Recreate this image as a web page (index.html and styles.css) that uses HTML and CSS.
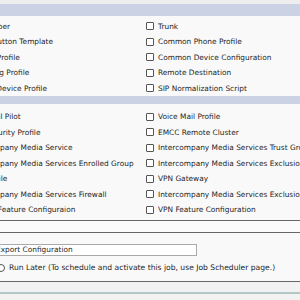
FILE: index.html
```html
<!DOCTYPE html>
<html>
<head>
<meta charset="utf-8">
<link rel="stylesheet" href="styles.css">
</head>
<body>
<div class="page">
  <div class="topband"></div>
  <div class="hdr hdr1"></div>
  <div class="grid sec1">
    <div class="cell"><span class="cb"></span><span>Gatekeeper</span></div>
    <div class="cell"><span class="cb"></span><span>Trunk</span></div>
    <div class="cell"><span class="cb"></span><span>Phone Button Template</span></div>
    <div class="cell"><span class="cb"></span><span>Common Phone Profile</span></div>
    <div class="cell"><span class="cb"></span><span>Softkey Profile</span></div>
    <div class="cell"><span class="cb"></span><span>Common Device Configuration</span></div>
    <div class="cell"><span class="cb"></span><span>Recording Profile</span></div>
    <div class="cell"><span class="cb"></span><span>Remote Destination</span></div>
    <div class="cell"><span class="cb"></span><span>Default Device Profile</span></div>
    <div class="cell"><span class="cb"></span><span>SIP Normalization Script</span></div>
  </div>
  <div class="hdr hdr2"></div>
  <div class="grid sec2">
    <div class="cell"><span class="cb"></span><span>Voicemail Pilot</span></div>
    <div class="cell"><span class="cb"></span><span>Voice Mail Profile</span></div>
    <div class="cell"><span class="cb"></span><span>Line Security Profile</span></div>
    <div class="cell"><span class="cb"></span><span>EMCC Remote Cluster</span></div>
    <div class="cell"><span class="cb"></span><span>Intercompany Media Service</span></div>
    <div class="cell"><span class="cb"></span><span>Intercompany Media Services Trust Group</span></div>
    <div class="cell"><span class="cb"></span><span>Intercompany Media Services Enrolled Group</span></div>
    <div class="cell"><span class="cb"></span><span>Intercompany Media Services Exclusion Group</span></div>
    <div class="cell"><span class="cb"></span><span>VPN Profile</span></div>
    <div class="cell"><span class="cb"></span><span>VPN Gateway</span></div>
    <div class="cell"><span class="cb"></span><span>Intercompany Media Services Firewall</span></div>
    <div class="cell"><span class="cb"></span><span>Intercompany Media Services Exclusion Number</span></div>
    <div class="cell"><span class="cb"></span><span>Remote Feature Configuraion</span></div>
    <div class="cell"><span class="cb"></span><span>VPN Feature Configuration</span></div>
  </div>
  <div class="rule"></div>
  <div class="gap"></div>
  <div class="rule"></div>
  <div class="job">
    <div class="field"><span class="inp">Export Configuration</span></div>
    <div class="radio-row"><span class="radio"></span><span>Run Later (To schedule and activate this job, use Job Scheduler page.)</span></div>
  </div>
  <div class="rule"></div>
  <div class="footer"><div class="teal"></div></div>
</div>
</body>
</html>
```
FILE: styles.css
```css
html, body {
  margin: 0;
  padding: 0;
  background: #f2f2f2;
  overflow: hidden;
}
body {
  font-family: "DejaVu Sans", Verdana, sans-serif;
  font-size: 7.4px;
  color: #1e1e1e;
}
.page {
  width: 300px;
  height: 300px;
  background: #f9f9f9;
}
.topband {
  height: 4px;
  background: #eeeeee;
}
.hdr {
  background: #cbd2e3;
}
.hdr1 {
  height: 12px;
}
.hdr2 {
  height: 8px;
}
.grid {
  display: grid;
  grid-template-columns: 191px 300px;
  margin-left: -45px;
  grid-auto-rows: 15.5px;
}
.sec1 {
  padding: 2px 0 0;
}
.sec2 {
  padding: 5px 0 3px;
}
.cell {
  display: flex;
  align-items: center;
  gap: 4px;
  padding-top: 1px;
  white-space: nowrap;
}
.cb {
  flex: none;
  width: 6px;
  height: 6px;
  border: 1px solid #555;
  background: #fff;
  border-radius: 1px;
}
.rule {
  height: 1px;
  background: #666;
}
.gap {
  height: 11px;
  background: #fbfbfb;
}
.job {
  padding: 11px 0 9px;
  display: flex;
  flex-direction: column;
  gap: 7px;
}
.field {
  margin-left: -6px;
}
.inp {
  display: block;
  box-sizing: border-box;
  width: 203px;
  height: 12px;
  line-height: 10px;
  border: 1px solid #aaa;
  background: #fff;
  padding-left: 1px;
  white-space: nowrap;
}
.radio-row {
  display: flex;
  align-items: center;
  gap: 4px;
  margin-left: -3px;
  font-size: 7.6px;
  white-space: nowrap;
}
.radio {
  flex: none;
  width: 6px;
  height: 6px;
  border: 1px solid #555;
  border-radius: 50%;
  background: #fff;
}
.footer {
  height: 20px;
  background: #f2f2f2;
  padding-top: 10px;
  box-sizing: border-box;
}
.teal {
  height: 2px;
  background: #b3c7c7;
}
```
